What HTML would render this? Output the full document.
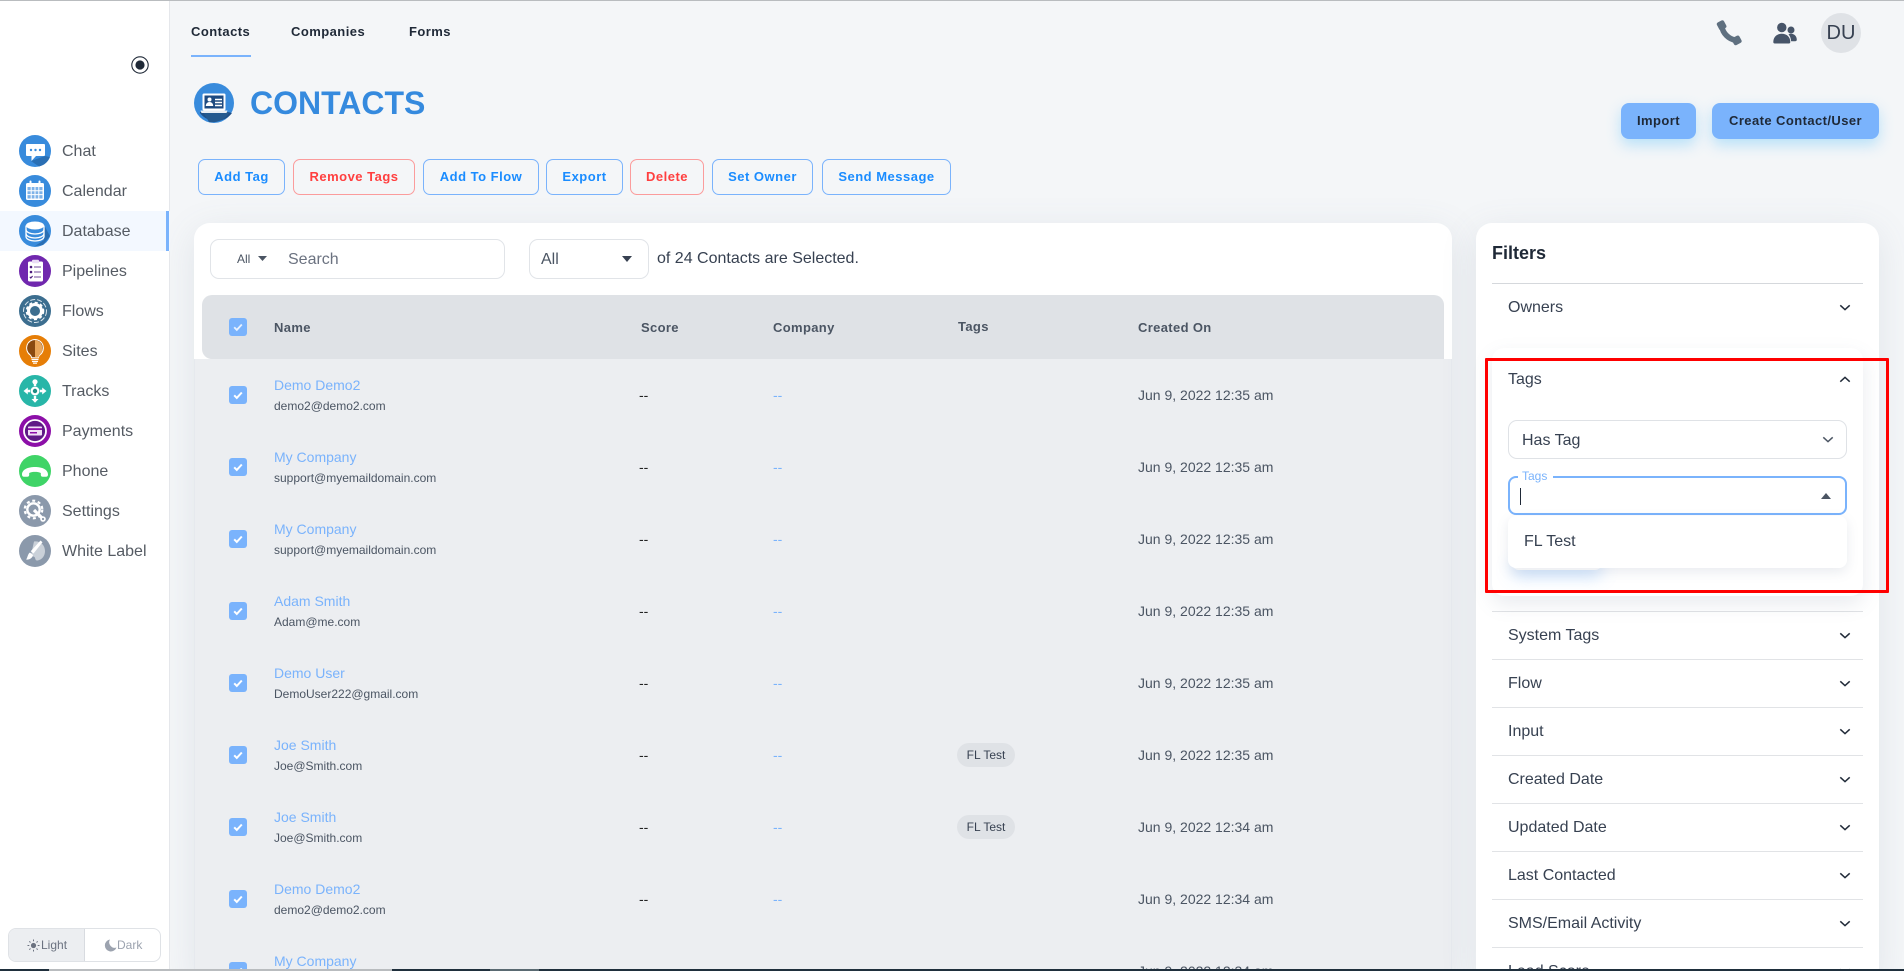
<!DOCTYPE html>
<html lang="en"><head><meta charset="utf-8"><title>Contacts</title>
<style>
html,body{margin:0;padding:0;width:1904px;height:971px;overflow:hidden;background:#f4f6f8;font-family:"Liberation Sans",Arial,sans-serif;color:#374151}
*{box-sizing:border-box}
#root{position:relative;width:1904px;height:971px;overflow:hidden;background:#f4f6f8}
.a{position:absolute}
.t{position:absolute;white-space:nowrap;line-height:20px}
.nav{position:absolute;left:62px;font-size:16px;line-height:20px;color:#555b63}
.ic{position:absolute;left:19px;width:32px;height:32px}
.tab{position:absolute;top:22px;font-size:13px;font-weight:700;letter-spacing:.45px;line-height:20px;color:#1f2937}
.btn{position:absolute;top:159px;height:36px;border:1px solid #7ab3fc;border-radius:7px;color:#1a8cff;font-size:13px;font-weight:700;letter-spacing:.5px;line-height:34px;text-align:center;white-space:nowrap}
.btn.r{border-color:#fb9c9c;color:#ff3f3f}
.pb{position:absolute;top:103px;height:36px;background:#7ab3fc;border-radius:8px;color:#1f2937;font-size:13px;font-weight:700;letter-spacing:.42px;line-height:36px;text-align:center;box-shadow:0 6px 14px rgba(110,200,250,.45);white-space:nowrap}
.card{position:absolute;background:#fff;border-radius:16px;box-shadow:0 8px 36px rgba(100,116,139,.13)}
.box{position:absolute;background:#fff;border:1px solid #e1e4e8;border-radius:9px}
.th{position:absolute;top:318px;font-size:13px;font-weight:700;letter-spacing:.35px;line-height:20px;color:#4b5563;white-space:nowrap}
.cb{position:absolute;left:229px;width:18px;height:18px;background:#7ab3fc;border-radius:3px}
.cb svg{display:block}
.nm{position:absolute;left:274px;font-size:14px;line-height:20px;color:#7ab3fc;white-space:nowrap}
.em{position:absolute;left:274px;font-size:12px;line-height:20px;color:#4b5563;white-space:nowrap}
.sc{position:absolute;left:639px;font-size:14px;line-height:20px;color:#222;white-space:nowrap}
.co{position:absolute;left:773px;font-size:14px;line-height:20px;color:#7ab3fc;white-space:nowrap}
.dt{position:absolute;left:1138px;font-size:14px;line-height:20px;color:#4b5563;white-space:nowrap}
.pill{position:absolute;left:957px;width:58px;height:24px;border-radius:12px;background:#dfe2e6;font-size:12px;line-height:24px;text-align:center;color:#374151;white-space:nowrap}
.ln{position:absolute;left:1492px;width:371px;height:1px;background:#e1e3e6}
.fl{position:absolute;left:1508px;font-size:16px;line-height:20px;color:#374151;white-space:nowrap}
.ch{position:absolute;left:1839px;width:12px;height:7px}
</style></head>
<body>
<div id="root">
<div class="a" style="left:0;top:0;width:1904px;height:1px;background:#b9bcbf;z-index:9"></div>

<!-- main cards -->
<div class="card" style="left:194px;top:223px;width:1258px;height:760px"></div>
<div class="a" style="left:194px;top:359px;width:1258px;height:612px;background:#eceef1;border-left:1px solid #e6e9ee;border-right:1px solid #e6e9ee"></div>
<div class="a" style="left:202px;top:295px;width:1242px;height:64px;background:#dfe2e6;border-radius:10px 10px 0 10px"></div>
<div class="card" style="left:1476px;top:223px;width:403px;height:760px"></div>

<!-- sidebar -->
<div class="a" style="left:0;top:0;width:170px;height:971px;background:#fff;border-right:1px solid #e5e7eb"></div>
<svg class="a" style="left:131px;top:56px" width="18" height="18" viewBox="0 0 18 18"><circle cx="9" cy="9" r="8.200" fill="none" stroke="#1f2937" stroke-width="1.100"/><circle cx="9" cy="9" r="4.600" fill="#1f2937"/></svg>
<div class="a" style="left:0;top:211px;width:170px;height:40px;background:#f3f8ff"></div>
<div class="a" style="left:166px;top:211px;width:3px;height:40px;background:#7ab3fc"></div>

<svg class="ic" style="top:135px" viewBox="0 0 32 32"><circle cx="16" cy="16" r="16" fill="#388bdc"/><path d="M12 26l14-5 5 1a16 16 0 0 1-11 9.500z" fill="#2a6fb4"/><path d="M8 9h17a1 1 0 0 1 1 1v10a1 1 0 0 1-1 1H17l-4.500 5v-5H8a1 1 0 0 1-1-1V10a1 1 0 0 1 1-1z" fill="#fff"/><circle cx="12" cy="15" r="1.200" fill="#388bdc"/><circle cx="16.500" cy="15" r="1.200" fill="#388bdc"/><circle cx="21" cy="15" r="1.200" fill="#388bdc"/></svg>
<svg class="ic" style="top:175px" viewBox="0 0 32 32"><circle cx="16" cy="16" r="16" fill="#388bdc"/><rect x="7" y="8" width="18" height="17" rx="1.500" fill="#fff"/><rect x="8.500" y="12" width="15" height="11.500" fill="#7eb2e8"/><path d="M8.500 15.800h15M8.500 19.600h15M12.200 12v11.500M16 12v11.500M19.800 12v11.500" stroke="#fff" stroke-width="1"/><rect x="10.500" y="5.500" width="2" height="5" rx="1" fill="#fff"/><rect x="19.500" y="5.500" width="2" height="5" rx="1" fill="#fff"/></svg>
<svg class="ic" style="top:215px" viewBox="0 0 32 32"><circle cx="16" cy="16" r="16" fill="#388bdc"/><path d="M25 10v15l-9 6 8-1 7-9z" fill="#2a6fb4"/><path d="M7 10.500v11c0 2.500 4 4.500 9 4.500s9-2 9-4.500v-11" fill="#388bdc" stroke="#fff" stroke-width="1.300"/><ellipse cx="16" cy="10.500" rx="9" ry="4" fill="#fff"/><path d="M7 14.500c0 2.500 4 4.500 9 4.500s9-2 9-4.500M7 18.500c0 2.500 4 4.500 9 4.500s9-2 9-4.500" fill="none" stroke="#fff" stroke-width="1.300"/></svg>
<svg class="ic" style="top:255px" viewBox="0 0 32 32"><circle cx="16" cy="16" r="16" fill="#7027ae"/><rect x="9" y="6.500" width="15" height="20" rx="1.500" fill="#fff"/><rect x="13" y="4.800" width="7" height="3.500" rx="1" fill="#e9dcf5"/><circle cx="12" cy="12" r="1.300" fill="#4b1b7c"/><circle cx="12" cy="17" r="1.300" fill="#4b1b7c"/><path d="M15 12h7M15 17h7M15 22h7" stroke="#6f4b98" stroke-width="1.100"/><path d="M10.800 21.800l1 1.200 1.800-2" stroke="#4b1b7c" stroke-width="1.100" fill="none"/></svg>
<svg class="ic" style="top:295px" viewBox="0 0 32 32"><circle cx="16" cy="16" r="16" fill="#3c6e8f"/><circle cx="16" cy="16" r="11.500" fill="none" stroke="#dbe6ee" stroke-width="1" stroke-dasharray="5 2"/><circle cx="16" cy="16" r="6.500" fill="none" stroke="#fff" stroke-width="3"/><circle cx="16" cy="16" r="8.300" fill="none" stroke="#fff" stroke-width="2" stroke-dasharray="3 2.500"/></svg>
<svg class="ic" style="top:335px" viewBox="0 0 32 32"><circle cx="16" cy="16" r="16" fill="#e67e07"/><path d="M16 4.500a8.500 8.500 0 0 0-5 15.300c1 .9 1.500 2 1.500 3h7c0-1 .5-2.100 1.500-3A8.500 8.500 0 0 0 16 4.500z" fill="#8a4a10" stroke="#fff" stroke-width="1"/><path d="M16 5v17.500h3.500c0-1 .5-2.100 1.500-3a8.500 8.500 0 0 0-5-14.500z" fill="#e9a65a"/><path d="M12.500 24.500h7M13 26.500h6M14 28.200h4" stroke="#fff" stroke-width="1.200"/></svg>
<svg class="ic" style="top:375px" viewBox="0 0 32 32"><circle cx="16" cy="16" r="16" fill="#28b6a8"/><circle cx="16" cy="16" r="4.500" fill="#fff"/><circle cx="16" cy="16" r="2.200" fill="#1f8f85"/><path d="M16 11V7M16 21v4M11 16H7.500M21 16h3.500" stroke="#fff" stroke-width="2.400"/><circle cx="16" cy="6.800" r="2.600" fill="#fff"/><path d="M12.500 24l3.500 3.800 3.500-3.800zM8.800 12.500L4.500 16l4.300 3.500zM23.200 12.500l4.300 3.500-4.300 3.500z" fill="#fff"/></svg>
<svg class="ic" style="top:415px" viewBox="0 0 32 32"><circle cx="16" cy="16" r="16" fill="#8c0fa8"/><circle cx="16" cy="16" r="11" fill="#5f1a86" stroke="#fff" stroke-width="1.800"/><rect x="9" y="11.500" width="14" height="9" rx="1" fill="#f0dff5"/><rect x="9" y="13.200" width="14" height="1.800" fill="#8c0fa8"/><rect x="11" y="17" width="7" height="1.500" fill="#8c0fa8"/></svg>
<svg class="ic" style="top:455px" viewBox="0 0 32 32"><circle cx="16" cy="16" r="16" fill="#3fd467"/><path d="M3 19.500c0-5 6-7.500 13-7.500s13 2.500 13 7.500c0 1.500-.8 2.300-2 2.300h-3.200c-1.300 0-2-.8-2-2v-1.800c-1.500-.8-3.600-1.100-5.800-1.100s-4.300.3-5.800 1.100v1.800c0 1.200-.7 2-2 2H5c-1.200 0-2-.8-2-2.300z" fill="#fff"/></svg>
<svg class="ic" style="top:495px" viewBox="0 0 32 32"><circle cx="16" cy="16" r="16" fill="#8b99ab"/><circle cx="14.500" cy="14.500" r="6.200" fill="none" stroke="#fff" stroke-width="2.400"/><circle cx="14.500" cy="14.500" r="8.800" fill="none" stroke="#fff" stroke-width="2.200" stroke-dasharray="3 2.700"/><path d="M15 15l8 8" stroke="#fff" stroke-width="3.200"/><circle cx="24" cy="24" r="2.800" fill="#fff"/><circle cx="24" cy="24" r="1.100" fill="#8b99ab"/></svg>
<svg class="ic" style="top:535px" viewBox="0 0 32 32"><circle cx="16" cy="16" r="16" fill="#8b99ab"/><path d="M15 6.500c5.500-1 11 3 11 9.500s-5 9.500-8 9.500c-2 0-1.500-2.500-2.500-3.500-1-1-3.500 0-3.500-2" fill="#fff" opacity=".55"/><path d="M21.500 5.500l2 1.800-9 11.200-2.800-2.300z" fill="#fff"/><path d="M11 17.500l3 2.500c-.5 3-3.500 5-7 4.500 1.700-1.500 1.500-5.500 4-7z" fill="#fff"/></svg>

<div class="nav" style="top:142px">Chat</div>
<div class="nav" style="top:182px">Calendar</div>
<div class="nav" style="top:222px">Database</div>
<div class="nav" style="top:262px">Pipelines</div>
<div class="nav" style="top:302px">Flows</div>
<div class="nav" style="top:342px">Sites</div>
<div class="nav" style="top:382px">Tracks</div>
<div class="nav" style="top:422px">Payments</div>
<div class="nav" style="top:462px">Phone</div>
<div class="nav" style="top:502px">Settings</div>
<div class="nav" style="top:542px">White Label</div>

<!-- theme toggle -->
<div class="a" style="left:8px;top:928px;width:153px;height:34px;border:1px solid #dfe2e6;border-radius:8px;overflow:hidden;background:#fff">
  <div class="a" style="left:0;top:0;width:76px;height:32px;background:#eceef1;border-right:1px solid #d8dbe0"></div>
</div>
<svg class="a" style="left:27px;top:939px" width="13" height="13" viewBox="0 0 13 13"><circle cx="6.500" cy="6.500" r="2.600" fill="#6b7280"/><path d="M6.500.5v1.800M6.500 10.700v1.800M.5 6.500h1.800M10.700 6.500h1.800M2.300 2.300l1.200 1.200M9.500 9.500l1.200 1.200M2.300 10.700l1.200-1.200M9.500 3.500l1.200-1.200" stroke="#6b7280" stroke-width="1"/></svg>
<div class="t" style="left:41px;top:935px;font-size:12px;color:#6b7280">Light</div>
<svg class="a" style="left:104px;top:939px" width="13" height="13" viewBox="0 0 13 13"><path d="M6 .5a6 6 0 1 0 6.500 8A5.500 5.500 0 0 1 6 .5z" fill="#9ca3af"/></svg>
<div class="t" style="left:117px;top:935px;font-size:12px;color:#9ca3af">Dark</div>

<!-- tabs -->
<div class="tab" style="left:191px">Contacts</div>
<div class="a" style="left:191px;top:55px;width:60px;height:2px;background:#7ab3fc"></div>
<div class="tab" style="left:291px">Companies</div>
<div class="tab" style="left:409px">Forms</div>

<!-- top right -->
<svg class="a" style="left:1716px;top:20px" width="26" height="26" viewBox="0 0 26 26"><path d="M6 6.500C6.500 13 13 19.500 19.500 20" fill="none" stroke="#5f7080" stroke-width="5.500"/><rect x="-4" y="-4" width="8" height="8.500" rx="2" transform="translate(5.500 5) rotate(-28)" fill="#5f7080"/><rect x="-4" y="-4" width="8.500" height="8" rx="2" transform="translate(20.500 20.500) rotate(-28)" fill="#5f7080"/></svg>
<svg class="a" style="left:1773px;top:22px" width="24" height="22" viewBox="0 0 24 22"><circle cx="8.800" cy="5.500" r="4.700" fill="#475569"/><circle cx="18" cy="8" r="3.500" fill="#475569"/><path d="M.3 20c0-5 3.500-8.300 8.500-8.300s8.500 3.300 8.500 8.300c0 1-.5 1.500-1.500 1.500H1.800C.8 21.500.3 21 .3 20z" fill="#475569"/><path d="M15.500 12.400c.8-.4 1.600-.6 2.500-.6 3.500 0 5.800 2.500 5.800 6 0 .9-.5 1.400-1.400 1.400h-4.300c-.2-2.800-1-5-2.600-6.800z" fill="#475569"/></svg>
<div class="a" style="left:1821px;top:13px;width:40px;height:40px;border-radius:50%;background:#dfe2e6;font-size:20px;line-height:40px;text-align:center;color:#374151">DU</div>

<!-- title -->
<svg class="a" style="left:194px;top:83px" width="40" height="40" viewBox="0 0 40 40"><circle cx="20" cy="20" r="20" fill="#388bdc"/><path d="M6 29h28l4 1a20 20 0 0 1-32 0z" fill="#1f4f86"/><path d="M9 29l6 10a20 20 0 0 0 20-9l-1-1z" fill="#24598f"/><rect x="8.500" y="10.500" width="23" height="17" rx="1.500" fill="#fff"/><rect x="10.500" y="12.500" width="19" height="13" fill="#1e4a80"/><circle cx="15.500" cy="16.500" r="2" fill="#fff"/><path d="M11.800 23c0-2.500 1.600-4 3.700-4s3.700 1.500 3.700 4z" fill="#fff"/><path d="M21 16.500h7M21 19.500h7M21 22.500h7" stroke="#fff" stroke-width="1.500"/><path d="M6.500 27.500h27l-1 2.500h-25z" fill="#e8edf3"/></svg>
<div class="a" style="left:250px;top:84px;font-size:32px;font-weight:700;line-height:38px;color:#358ade;white-space:nowrap">CONTACTS</div>

<!-- buttons -->
<div class="btn" style="left:198px;width:87px">Add Tag</div>
<div class="btn r" style="left:293px;width:122px">Remove Tags</div>
<div class="btn" style="left:423px;width:116px">Add To Flow</div>
<div class="btn" style="left:546px;width:77px">Export</div>
<div class="btn r" style="left:630px;width:74px">Delete</div>
<div class="btn" style="left:712px;width:101px">Set Owner</div>
<div class="btn" style="left:822px;width:129px">Send Message</div>
<div class="pb" style="left:1621px;width:75px">Import</div>
<div class="pb" style="left:1712px;width:167px">Create Contact/User</div>

<!-- search -->
<div class="box" style="left:210px;top:239px;width:295px;height:40px"></div>
<div class="t" style="left:237px;top:249px;font-size:12px;color:#4b5563">All</div>
<svg class="a" style="left:258px;top:256px" width="9" height="5" viewBox="0 0 9 5"><path d="M0 0h9L4.500 5z" fill="#4b5563"/></svg>
<div class="t" style="left:288px;top:250px;font-size:16px;color:#6b7280">Search</div>
<div class="box" style="left:529px;top:239px;width:120px;height:40px"></div>
<div class="t" style="left:541px;top:250px;font-size:16px;color:#4b5563">All</div>
<svg class="a" style="left:622px;top:256px" width="10" height="6" viewBox="0 0 10 6"><path d="M0 0h10L5 6z" fill="#374151"/></svg>
<div class="t" style="left:657px;top:249px;font-size:16px;color:#374151">of 24 Contacts are Selected.</div>

<!-- table header -->
<div class="cb" style="top:318px"><svg width="18" height="18" viewBox="0 0 18 18"><path d="M5.200 9.300l2.600 2.600 5-5.400" fill="none" stroke="#e8f1fe" stroke-width="1.800"/></svg></div>
<div class="th" style="left:274px">Name</div>
<div class="th" style="left:641px">Score</div>
<div class="th" style="left:773px">Company</div>
<div class="th" style="left:958px;top:317px">Tags</div>
<div class="th" style="left:1138px">Created On</div>

<!-- rows -->
<div class="cb" style="top:386px"><svg width="18" height="18" viewBox="0 0 18 18"><path d="M5.200 9.300l2.600 2.600 5-5.400" fill="none" stroke="#fff" stroke-width="2"/></svg></div>
<div class="nm" style="top:375px">Demo Demo2</div><div class="em" style="top:396px">demo2@demo2.com</div><div class="sc" style="top:385px">--</div><div class="co" style="top:385px">--</div><div class="dt" style="top:385px">Jun 9, 2022 12:35 am</div>

<div class="cb" style="top:458px"><svg width="18" height="18" viewBox="0 0 18 18"><path d="M5.200 9.300l2.600 2.600 5-5.400" fill="none" stroke="#fff" stroke-width="2"/></svg></div>
<div class="nm" style="top:447px">My Company</div><div class="em" style="top:468px">support@myemaildomain.com</div><div class="sc" style="top:457px">--</div><div class="co" style="top:457px">--</div><div class="dt" style="top:457px">Jun 9, 2022 12:35 am</div>

<div class="cb" style="top:530px"><svg width="18" height="18" viewBox="0 0 18 18"><path d="M5.200 9.300l2.600 2.600 5-5.400" fill="none" stroke="#fff" stroke-width="2"/></svg></div>
<div class="nm" style="top:519px">My Company</div><div class="em" style="top:540px">support@myemaildomain.com</div><div class="sc" style="top:529px">--</div><div class="co" style="top:529px">--</div><div class="dt" style="top:529px">Jun 9, 2022 12:35 am</div>

<div class="cb" style="top:602px"><svg width="18" height="18" viewBox="0 0 18 18"><path d="M5.200 9.300l2.600 2.600 5-5.400" fill="none" stroke="#fff" stroke-width="2"/></svg></div>
<div class="nm" style="top:591px">Adam Smith</div><div class="em" style="top:612px">Adam@me.com</div><div class="sc" style="top:601px">--</div><div class="co" style="top:601px">--</div><div class="dt" style="top:601px">Jun 9, 2022 12:35 am</div>

<div class="cb" style="top:674px"><svg width="18" height="18" viewBox="0 0 18 18"><path d="M5.200 9.300l2.600 2.600 5-5.400" fill="none" stroke="#fff" stroke-width="2"/></svg></div>
<div class="nm" style="top:663px">Demo User</div><div class="em" style="top:684px">DemoUser222@gmail.com</div><div class="sc" style="top:673px">--</div><div class="co" style="top:673px">--</div><div class="dt" style="top:673px">Jun 9, 2022 12:35 am</div>

<div class="cb" style="top:746px"><svg width="18" height="18" viewBox="0 0 18 18"><path d="M5.200 9.300l2.600 2.600 5-5.400" fill="none" stroke="#fff" stroke-width="2"/></svg></div>
<div class="nm" style="top:735px">Joe Smith</div><div class="em" style="top:756px">Joe@Smith.com</div><div class="sc" style="top:745px">--</div><div class="co" style="top:745px">--</div><div class="pill" style="top:743px">FL Test</div><div class="dt" style="top:745px">Jun 9, 2022 12:35 am</div>

<div class="cb" style="top:818px"><svg width="18" height="18" viewBox="0 0 18 18"><path d="M5.200 9.300l2.600 2.600 5-5.400" fill="none" stroke="#fff" stroke-width="2"/></svg></div>
<div class="nm" style="top:807px">Joe Smith</div><div class="em" style="top:828px">Joe@Smith.com</div><div class="sc" style="top:817px">--</div><div class="co" style="top:817px">--</div><div class="pill" style="top:815px">FL Test</div><div class="dt" style="top:817px">Jun 9, 2022 12:34 am</div>

<div class="cb" style="top:890px"><svg width="18" height="18" viewBox="0 0 18 18"><path d="M5.200 9.300l2.600 2.600 5-5.400" fill="none" stroke="#fff" stroke-width="2"/></svg></div>
<div class="nm" style="top:879px">Demo Demo2</div><div class="em" style="top:900px">demo2@demo2.com</div><div class="sc" style="top:889px">--</div><div class="co" style="top:889px">--</div><div class="dt" style="top:889px">Jun 9, 2022 12:34 am</div>

<div class="cb" style="top:962px"><svg width="18" height="18" viewBox="0 0 18 18"><path d="M5.200 9.300l2.600 2.600 5-5.400" fill="none" stroke="#fff" stroke-width="2"/></svg></div>
<div class="nm" style="top:951px">My Company</div><div class="dt" style="top:961px">Jun 9, 2022 12:34 am</div>

<!-- filters -->
<div class="a" style="left:1492px;top:243px;font-size:18px;font-weight:700;line-height:20px;color:#1f2937">Filters</div>
<div class="ln" style="top:283px;background:#d5d8dc"></div>
<div class="fl" style="top:298px">Owners</div>
<svg class="ch" style="top:304px" viewBox="0 0 14 8"><path d="M1.500 1.500L7 6.500l5.500-5" fill="none" stroke="#1f2937" stroke-width="1.800"/></svg>

<div class="ln" style="top:611px"></div>
<div class="fl" style="top:626px">System Tags</div><svg class="ch" style="top:632px" viewBox="0 0 14 8"><path d="M1.500 1.500L7 6.500l5.500-5" fill="none" stroke="#1f2937" stroke-width="1.800"/></svg>
<div class="ln" style="top:659px"></div>
<div class="fl" style="top:674px">Flow</div><svg class="ch" style="top:680px" viewBox="0 0 14 8"><path d="M1.500 1.500L7 6.500l5.500-5" fill="none" stroke="#1f2937" stroke-width="1.800"/></svg>
<div class="ln" style="top:707px"></div>
<div class="fl" style="top:722px">Input</div><svg class="ch" style="top:728px" viewBox="0 0 14 8"><path d="M1.500 1.500L7 6.500l5.500-5" fill="none" stroke="#1f2937" stroke-width="1.800"/></svg>
<div class="ln" style="top:755px"></div>
<div class="fl" style="top:770px">Created Date</div><svg class="ch" style="top:776px" viewBox="0 0 14 8"><path d="M1.500 1.500L7 6.500l5.500-5" fill="none" stroke="#1f2937" stroke-width="1.800"/></svg>
<div class="ln" style="top:803px"></div>
<div class="fl" style="top:818px">Updated Date</div><svg class="ch" style="top:824px" viewBox="0 0 14 8"><path d="M1.500 1.500L7 6.500l5.500-5" fill="none" stroke="#1f2937" stroke-width="1.800"/></svg>
<div class="ln" style="top:851px"></div>
<div class="fl" style="top:866px">Last Contacted</div><svg class="ch" style="top:872px" viewBox="0 0 14 8"><path d="M1.500 1.500L7 6.500l5.500-5" fill="none" stroke="#1f2937" stroke-width="1.800"/></svg>
<div class="ln" style="top:899px"></div>
<div class="fl" style="top:914px">SMS/Email Activity</div><svg class="ch" style="top:920px" viewBox="0 0 14 8"><path d="M1.500 1.500L7 6.500l5.500-5" fill="none" stroke="#1f2937" stroke-width="1.800"/></svg>
<div class="ln" style="top:947px"></div>
<div class="fl" style="top:962px">Lead Score</div><svg class="ch" style="top:968px" viewBox="0 0 14 8"><path d="M1.500 1.500L7 6.500l5.500-5" fill="none" stroke="#1f2937" stroke-width="1.800"/></svg>

<!-- tags panel -->
<div class="a" style="left:1492px;top:348px;width:371px;height:248px;background:#fff;border-radius:12px;box-shadow:0 8px 20px rgba(100,116,139,.14)"></div>
<div class="fl" style="top:370px">Tags</div>
<svg class="ch" style="top:376px" viewBox="0 0 14 8"><path d="M1.500 6.500L7 1.500l5.500 5" fill="none" stroke="#1f2937" stroke-width="1.800"/></svg>
<div class="box" style="left:1508px;top:420px;width:339px;height:39px;border-color:#dfe2e6"></div>
<div class="fl" style="left:1522px;top:431px">Has Tag</div>
<svg class="ch" style="left:1822px;top:436px" viewBox="0 0 14 8"><path d="M1.500 1.500L7 6.500l5.500-5" fill="none" stroke="#4b5563" stroke-width="1.800"/></svg>
<div class="a" style="left:1508px;top:476px;width:339px;height:39px;border:2px solid #7ab3fc;border-radius:8px;background:#fff"></div>
<div class="a" style="left:1518px;top:474px;width:35px;height:4px;background:#fff"></div>
<div class="a" style="left:1522px;top:469px;font-size:12px;line-height:14px;color:#7ab3fc">Tags</div>
<div class="a" style="left:1520px;top:488px;width:1px;height:17px;background:#1f2937"></div>
<svg class="a" style="left:1821px;top:493px" width="10" height="6" viewBox="0 0 10 6"><path d="M0 6h10L5 0z" fill="#4b5563"/></svg>
<div class="a" style="left:1512px;top:556px;width:90px;height:14px;border-radius:8px;box-shadow:0 6px 16px rgba(90,160,245,.35)"></div>
<div class="a" style="left:1508px;top:516px;width:339px;height:52px;background:#fff;border-radius:8px;box-shadow:0 4px 12px rgba(100,116,139,.14)"></div>
<div class="fl" style="left:1524px;top:532px">FL Test</div>
<div class="a" style="left:1485px;top:358px;width:404px;height:235px;border:3px solid #ff0000;border-radius:1px"></div>

<!-- bottom edge -->
<div class="a" style="left:0;top:969px;width:1904px;height:2px;background:#1f2f3c;z-index:9"></div>
<div class="a" style="left:49px;top:969px;width:343px;height:2px;background:#b9bcbf;z-index:9"></div>
<div class="a" style="left:490px;top:969px;width:49px;height:2px;background:#5a6a72;z-index:9"></div>
</div>
</body></html>
